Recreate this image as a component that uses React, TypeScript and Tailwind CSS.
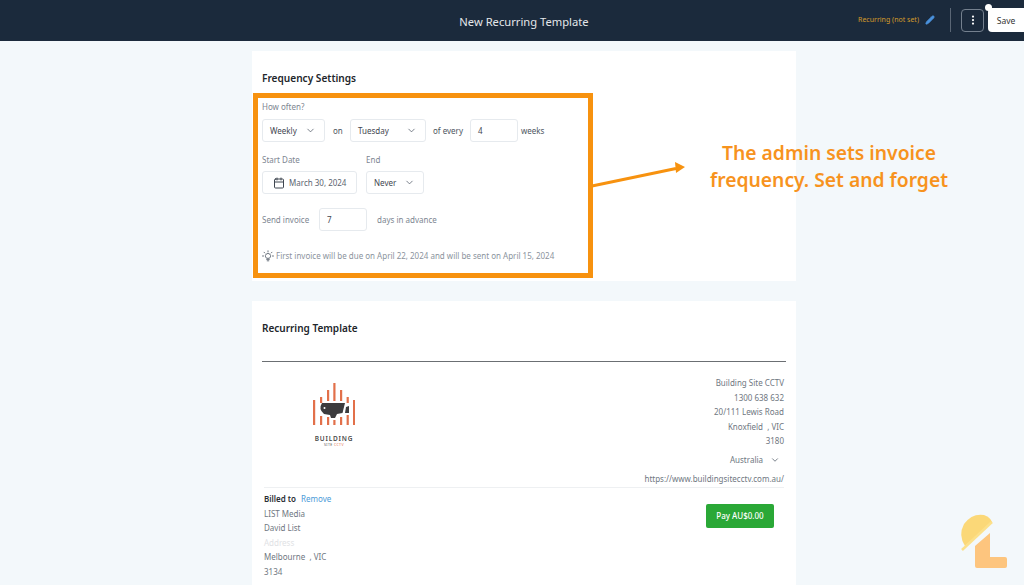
import { ChevronDown, Calendar, Pencil, EllipsisVertical } from "lucide-react";

const Select = ({ label, className }: { label: string; className: string }) => (
  <div className={`h-[23px] flex items-center justify-between bg-white border border-[#e6eaee] rounded-[3px] pl-[7px] pr-[8px] text-[#3f4650] ${className}`}>
    <span>{label}</span>
    <ChevronDown className="size-[11px] text-[#4b5563]" strokeWidth={1.6} />
  </div>
);

const NumberBox = ({ value }: { value: string }) => (
  <div className="w-[48px] h-[23px] flex items-center bg-white border border-[#e6eaee] rounded-[3px] pl-[7px] text-[#3f4650]">{value}</div>
);

const HintBulb = () => (
  <svg className="mr-[2px]" width="12" height="12" viewBox="0 0 12 12" fill="none" stroke="#5c6570" strokeWidth="0.9" strokeLinecap="round">
    <path d="M4.3 8 Q3.2 6.9 3.4 5.6 Q3.7 3.6 6 3.4 Q8.3 3.6 8.6 5.6 Q8.8 6.9 7.7 8 Z" />
    <path d="M4.7 9.4 H7.3 M5.2 10.8 H6.8" />
    <path d="M6 0.8 V1.9 M2 2.2 L2.8 3 M10 2.2 L9.2 3 M0.5 6 H1.6 M10.4 6 H11.5" />
  </svg>
);

const Logo = () => (
  <div className="w-[90px] flex flex-col items-center">
    <svg width="42" height="42" viewBox="0 0 42 42">
      <g fill="#e2704a">
        <rect x="0" y="17" width="2.2" height="25" />
        <rect x="7" y="14" width="2.2" height="6" />
        <rect x="7" y="33" width="2.2" height="9" />
        <rect x="14" y="7" width="2.2" height="11" />
        <rect x="14" y="34" width="2.2" height="8" />
        <rect x="20.3" y="0" width="2.2" height="18" />
        <rect x="20.3" y="37" width="2.2" height="5" />
        <rect x="27" y="7" width="2.2" height="11" />
        <rect x="27" y="34" width="2.2" height="8" />
        <rect x="33.6" y="14" width="2.2" height="6" />
        <rect x="33.6" y="32" width="2.2" height="10" />
        <rect x="40" y="17" width="2.2" height="25" />
      </g>
      <path d="M9 20 L32 20 L29.5 30 L24 31 L22 35 L18 35 L17 32 L11 31 Q5 26 9 20 Z" fill="#3c3c3e" />
      <path d="M33 24 L36 23 L36 30 L32 30 Z" fill="#3c3c3e" />
      <circle cx="11.5" cy="25" r="1" fill="#fff" />
    </svg>
    <div className="mt-[10px] text-[6.5px] leading-[8px] font-semibold tracking-[0.8px] text-[#4a4a4a]">BUILDING</div>
    <div className="text-[3.5px] leading-[4px] tracking-[0.4px] text-[#555]">SITE <span className="text-[#e2704a]">CCTV</span></div>
  </div>
);

export default function App() {
  return (
    <div className="relative w-[1024px] h-[585px] overflow-hidden bg-[#f3f8fb] text-[8px] font-['Noto_Sans','Open_Sans',sans-serif]">
      <header className="h-[41px] flex items-center bg-[#1b2a3c] relative">
        <h1 className="flex-1 pl-[24px] pt-[2px] text-center text-[11.2px] text-[#e4e7ea] leading-none">New Recurring Template</h1>
        <div className="absolute right-0 top-[8px] h-[24px] flex items-center">
          <span className="text-[7px] pt-[1px] text-[#d39a2b]">Recurring (not set)</span>
          <Pencil className="size-[10px] ml-[6px] text-[#4b93de] fill-[#4b93de]" />
          <div className="w-px h-[24px] bg-[#5a6675] ml-[15px]" />
          <div className="size-[23px] ml-[10px] flex items-center justify-center border border-[#74808e] rounded-[4px]">
            <EllipsisVertical className="size-[12px] text-white" strokeWidth={2.5} />
          </div>
          <div className="relative w-[36px] h-[24px] ml-[4px] pt-[2px] flex items-center justify-center bg-white rounded-l-[4px] text-[8.5px] text-[#333]">
            Save
            <div className="absolute -left-[3px] -top-[4px] size-[7px] rounded-full bg-white" />
          </div>
        </div>
      </header>

      <main className="w-[544px] ml-[252px] pt-[10px] flex flex-col gap-[20px]">
        <section className="h-[230px] bg-white pl-[10px] pt-[20px] text-[#7d8691]">
          <h2 className="text-[10.1px] leading-[14px] font-semibold text-[#22262b]">Frequency Settings</h2>
          <div className="mt-[16px] leading-[12px]">How often?</div>
          <div className="mt-[6px] flex items-center">
            <Select label="Weekly" className="w-[63px]" />
            <span className="ml-[8px] w-[17px] text-[#4d5560]">on</span>
            <Select label="Tuesday" className="w-[76px]" />
            <span className="ml-[7px] w-[37px] text-[#4d5560]">of every</span>
            <NumberBox value="4" />
            <span className="ml-[3px] text-[#4d5560]">weeks</span>
          </div>
          <div className="mt-[12px] flex">
            <div className="w-[104px]">
              <div className="leading-[12px]">Start Date</div>
              <div className="mt-[5px] w-[95px] h-[23px] flex items-center bg-white border border-[#e6eaee] rounded-[3px] pl-[10px] text-[#5c6570]">
                <Calendar className="size-[12px] text-[#3f4650] mr-[4px]" strokeWidth={2} />
                March 30, 2024
              </div>
            </div>
            <div>
              <div className="leading-[12px]">End</div>
              <Select label="Never" className="mt-[5px] w-[58px]" />
            </div>
          </div>
          <div className="mt-[14px] flex items-center">
            <span className="w-[57px]">Send invoice</span>
            <NumberBox value="7" />
            <span className="ml-[10px]">days in advance</span>
          </div>
          <div className="mt-[19px] flex items-center leading-[12px] text-[#8b939d]">
            <HintBulb />
            First invoice will be due on April 22, 2024 and will be sent on April 15, 2024
          </div>
        </section>

        <section className="h-[300px] bg-white px-[10px] pt-[20px] text-[#6f7781]">
          <h2 className="text-[10px] leading-[14px] font-semibold text-[#22262b]">Recurring Template</h2>
          <div className="mt-[26px] h-px bg-[#6b6f73]" />
          <div className="mt-[15px] h-[110px] pl-[27px] pr-[2px] flex justify-between">
            <div className="mt-[6px]"><Logo /></div>
            <div className="flex flex-col items-end leading-[14.5px] -mt-[1px]">
              <span>Building Site CCTV</span>
              <span>1300 638 632</span>
              <span>20/111 Lewis Road</span>
              <span>Knoxfield &nbsp;, VIC</span>
              <span>3180</span>
              <span className="mt-[4px] flex items-center pr-[4px]">
                Australia
                <ChevronDown className="size-[10px] ml-[7px]" strokeWidth={2.2} />
              </span>
              <span className="mt-[5px]">https://www.buildingsitecctv.com.au/</span>
            </div>
          </div>
          <div className="mx-[2px] h-px bg-[#eef0f2]" />
          <div className="mt-[4px] pl-[2px] pr-[12px] flex justify-between">
            <div className="leading-[14.6px]">
              <div>
                <span className="font-semibold text-[#2a2e33]">Billed to</span>
                <span className="ml-[5px] text-[#4a9bd8]">Remove</span>
              </div>
              <div>LIST Media</div>
              <div>David List</div>
              <div className="text-[#dfe2e5]">Address</div>
              <div>Melbourne &nbsp;, VIC</div>
              <div>3134</div>
            </div>
            <button className="mt-[12px] w-[68px] h-[24px] bg-[#2aa836] rounded-[2px] text-white font-medium">Pay AU$0.00</button>
          </div>
        </section>
      </main>

      {/* annotation overlay */}
      <div className="absolute left-[253px] top-[93px] w-[340px] h-[185px] border-[5px] border-[#f7920f]" />
      <svg className="absolute left-[590px] top-[160px]" width="100" height="30" viewBox="0 0 100 30">
        <path d="M2 26 L86 8.5" stroke="#f7920f" strokeWidth="3" fill="none" />
        <path d="M85 2 L95 7 L86 13 Z" fill="#f7920f" />
      </svg>
      <div className="absolute left-[689px] top-[139px] w-[280px] text-center text-[19.3px] leading-[27px] font-semibold text-[#f7931e]">
        The admin sets invoice<br />frequency. Set and forget
      </div>

      <svg className="absolute left-[958px] top-[513px]" width="52" height="62" viewBox="0 0 52 62">
        <path d="M17 33 L32 20 V44 H47 Q49 44 49 46 V53 Q49 55 47 55 H19 Q17 55 17 53 Z" fill="#fdc57e" />
        <path d="M7 33 Q0 22 6 11 Q14 0 26 2 Q32 4 34 9 Z" fill="#fbd878" />
        <path d="M4 37 L34 9" stroke="#fce08a" strokeWidth="2.5" />
      </svg>
    </div>
  );
}
